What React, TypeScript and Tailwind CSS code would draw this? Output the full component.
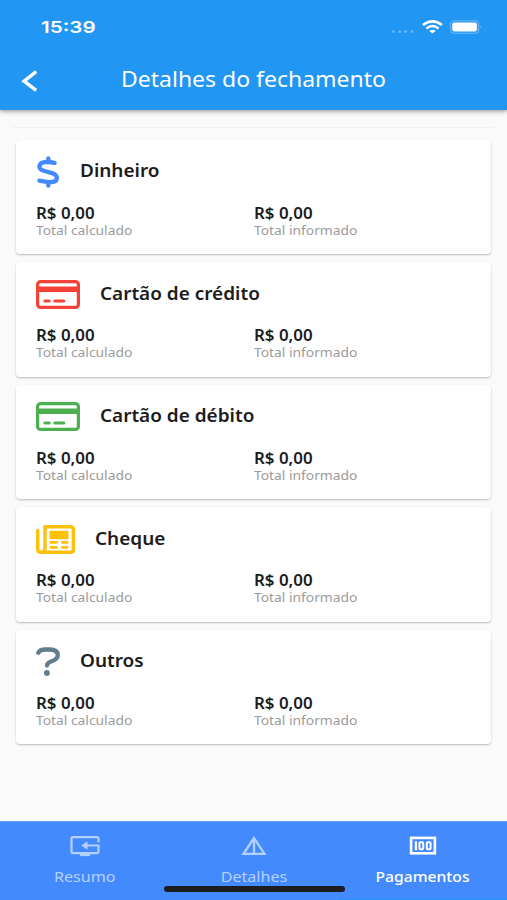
import type { ReactNode } from 'react'

type Payment = {
  title: string
  icon: ReactNode
  calculated: string
  informed: string
}

function DollarIcon() {
  return (
    <svg className="h-8 w-6 shrink-0" viewBox="0 0 24 32" fill="none" stroke="#448aff" strokeWidth={4.3} strokeLinecap="round" strokeLinejoin="round">
      <path d="M18.6 6.9C16 6.3 13 5.9 10 6C2.2 6.3 1.6 13 7 14.5L16 17.1C22.8 19.2 22.2 25.7 15.5 26C11 26.2 7 25.5 3.4 24.6" />
      <path d="M12.3 2.3V5M12.3 27V29.7" />
    </svg>
  )
}

function CardIcon({ color }: { color: string }) {
  return (
    <svg className="h-[29px] w-[44px] shrink-0" viewBox="0 0 44 29" fill="none" stroke={color}>
      <rect x="1.6" y="1.6" width="40.8" height="25.8" rx="3" strokeWidth={3.2} />
      <path d="M2 9.3H42" strokeWidth={5.4} />
      <path d="M8.8 21H13.2M18.8 21H27.8" strokeWidth={3} strokeLinecap="round" />
    </svg>
  )
}

function NewspaperIcon() {
  return (
    <svg className="h-[29px] w-[39px] shrink-0" viewBox="0 0 39 29" fill="none" stroke="#ffc107" strokeLinecap="round">
      <path d="M9 1.8H34.5Q37.3 1.8 37.3 4.6V24.5Q37.3 27.3 34.5 27.3H5Q1.7 27.3 1.7 24V5.5" strokeWidth={3.4} strokeLinejoin="round" />
      <path d="M9 1.8V23.5Q9 27 5.3 27.3" strokeWidth={3.4} />
      <rect x="13.5" y="5.7" width="19" height="8.5" rx="1" fill="#ffc107" stroke="none" />
      <path d="M14.8 17.4H20.7M26.4 17.4H31.2M14.8 22.3H20.7M26.4 22.3H31.2" strokeWidth={2.8} />
    </svg>
  )
}

function QuestionIcon() {
  return (
    <svg className="h-[29px] w-6 shrink-0" viewBox="0 0 24 29" fill="none" stroke="#607d8b" strokeWidth={4.3} strokeLinecap="round" strokeLinejoin="round">
      <path d="M2.3 5.7C3.6 3.3 6 2.5 9 2.5H13.5C19 2.5 21.8 4.6 21.8 8.2C21.8 11.6 19 13 15.5 14.3C12.5 15.4 11 16.4 11 18.6" />
      <circle cx="10.9" cy="26" r="2.9" fill="#607d8b" stroke="none" />
    </svg>
  )
}

const PAYMENTS: Payment[] = [
  { title: 'Dinheiro', icon: <DollarIcon />, calculated: 'R$ 0,00', informed: 'R$ 0,00' },
  { title: 'Cartão de crédito', icon: <CardIcon color="#f44336" />, calculated: 'R$ 0,00', informed: 'R$ 0,00' },
  { title: 'Cartão de débito', icon: <CardIcon color="#4caf50" />, calculated: 'R$ 0,00', informed: 'R$ 0,00' },
  { title: 'Cheque', icon: <NewspaperIcon />, calculated: 'R$ 0,00', informed: 'R$ 0,00' },
  { title: 'Outros', icon: <QuestionIcon />, calculated: 'R$ 0,00', informed: 'R$ 0,00' },
]

function StatusBar() {
  return (
    <div className="flex h-[54px] items-center justify-between pl-[41px] pr-[25px] text-white">
      <span className="origin-left scale-x-[1.25] pt-px font-['Inter'] text-[16.5px] font-semibold">15:39</span>
      <div className="flex items-center">
        <svg className="h-[14px] w-[22px]" viewBox="0 0 22 14" fill="#90caf9" opacity={0.6}>
          <circle cx="1.5" cy="11.5" r="1.5" />
          <circle cx="7.7" cy="11.5" r="1.5" />
          <circle cx="13.7" cy="11.5" r="1.5" />
          <circle cx="19.9" cy="11.5" r="1.5" />
        </svg>
        <svg className="ml-2 h-[14px] w-[21px]" viewBox="0 0 21 14" fill="none" stroke="white" strokeWidth={2.5}>
          <path d="M1 5.1Q10.5 -2.4 20 5.1" />
          <path d="M4.4 8.4Q10.5 3.6 16.6 8.4" />
          <path d="M7.4 10.9Q10.5 8.5 13.6 10.9L10.5 13.5Z" fill="white" stroke="none" />
        </svg>
        <svg className="ml-[7px] h-[14px] w-[32px]" viewBox="0 0 32 14" fill="none">
          <rect x="0.6" y="0.8" width="28" height="12.4" rx="3.5" stroke="white" strokeOpacity={0.35} strokeWidth={1.1} />
          <rect x="2.3" y="2.5" width="24.6" height="9" rx="2" fill="white" />
          <path d="M30.2 5.2Q31.6 7 30.2 8.8Z" fill="white" fillOpacity={0.5} />
        </svg>
      </div>
    </div>
  )
}

function Amount({ value, label }: { value: string; label: string }) {
  return (
    <div className="w-[218px]">
      <p className="origin-left scale-x-[1.09] whitespace-nowrap text-[15.5px] font-semibold leading-[18px] text-[#1c1c1c]">{value}</p>
      <p className="origin-left scale-x-[1.105] whitespace-nowrap pt-px text-[12.5px] leading-4 text-[#9b9b9b]">{label}</p>
    </div>
  )
}

function PaymentCard({ payment }: { payment: Payment }) {
  return (
    <section className="h-[114.5px] rounded bg-white px-5 pt-4 shadow-[0_1px_2px_rgba(0,0,0,0.25)]">
      <div className="flex h-8 items-center gap-5">
        {payment.icon}
        <h2 className="-ml-[0.5px] origin-left scale-x-[1.025] whitespace-nowrap pb-[3px] text-[18.5px] font-semibold leading-6 text-[#1c1c1c]">{payment.title}</h2>
      </div>
      <div className="mt-4 flex">
        <Amount value={payment.calculated} label="Total calculado" />
        <Amount value={payment.informed} label="Total informado" />
      </div>
    </section>
  )
}

function Tab({ label, icon, active }: { label: string; icon: ReactNode; active?: boolean }) {
  return (
    <button type="button" className={`flex flex-1 flex-col items-center pt-[13px] ${active ? 'text-white' : 'text-[#b4d0ff]'}`}>
      {icon}
      <span className={`mt-[9px] text-[14.5px] leading-5 ${active ? 'scale-x-[1.08] font-medium' : 'scale-x-[1.11]'}`}>{label}</span>
    </button>
  )
}

export default function App() {
  return (
    <div className="flex h-[900px] w-[507px] flex-col overflow-hidden bg-[#fafafa] font-['Noto_Sans',sans-serif]">
      <header className="z-10 h-[110px] shrink-0 bg-[#2196f3] shadow-[0_1px_5px_rgba(0,0,0,0.45)]">
        <StatusBar />
        <div className="flex h-[52px] items-center pl-[21px]">
          <svg className="mt-px h-[22px] w-[18px]" viewBox="0 0 18 22" fill="none" stroke="white" strokeWidth={3.4}>
            <path d="M15.2 1.7L3 11.2L15.2 20.4" />
          </svg>
          <h1 className="ml-[82px] origin-left scale-x-[1.095] whitespace-nowrap text-[21px] text-white">Detalhes do fechamento</h1>
        </div>
      </header>

      <main className="flex-1 px-4">
        <div className="-mx-1 mt-[17px] h-px bg-[#f0f1f3]" />
        <div className="mt-[11.5px] flex flex-col gap-2">
          {PAYMENTS.map((p) => (
            <PaymentCard key={p.title} payment={p} />
          ))}
        </div>
      </main>

      <nav className="relative flex h-[79px] shrink-0 border-t border-[#64a5fa] bg-[#448aff]">
        <Tab
          label="Resumo"
          icon={
            <svg className="h-[22px] w-[30px]" viewBox="0 0 30 22" fill="none" stroke="currentColor" strokeWidth={2.2}>
              <path d="M28.5 7.2V3.5Q28.5 2.2 27.2 2.2H2.8Q1.5 2.2 1.5 3.5V16.8Q1.5 18.1 2.8 18.1H27.2Q28.5 18.1 28.5 16.8V10.5H14" />
              <path d="M17.5 6.3L11.3 10.5L17.5 14.7Z" fill="currentColor" stroke="none" />
              <path d="M10 19.8H20" strokeWidth={2.6} />
            </svg>
          }
        />
        <Tab
          label="Detalhes"
          icon={
            <svg className="h-[22px] w-[28px]" viewBox="0 0 28 22" fill="none" stroke="currentColor" strokeWidth={2.3}>
              <path d="M14 3L3.5 18.8H24.5Z" />
              <path d="M14 3V19" />
            </svg>
          }
        />
        <Tab
          label="Pagamentos"
          active
          icon={
            <svg className="h-[22px] w-[28px]" viewBox="0 0 28 22" fill="none" stroke="currentColor" strokeWidth={2}>
              <rect x="2.1" y="2.9" width="23.8" height="15.4" strokeWidth={2.6} />
              <path d="M6.9 6.3V15.2" strokeWidth={2.2} />
              <rect x="10.4" y="7.2" width="3.8" height="7" rx="1" />
              <rect x="17.8" y="7.2" width="3.8" height="7" rx="1" />
            </svg>
          }
        />
        <div className="absolute bottom-[8px] left-[164px] h-[6px] w-[181px] rounded-full bg-[#1d1d20]" />
        <div className="absolute bottom-0 right-0 h-px w-[169px] bg-[#2196f3]" />
      </nav>
    </div>
  )
}
